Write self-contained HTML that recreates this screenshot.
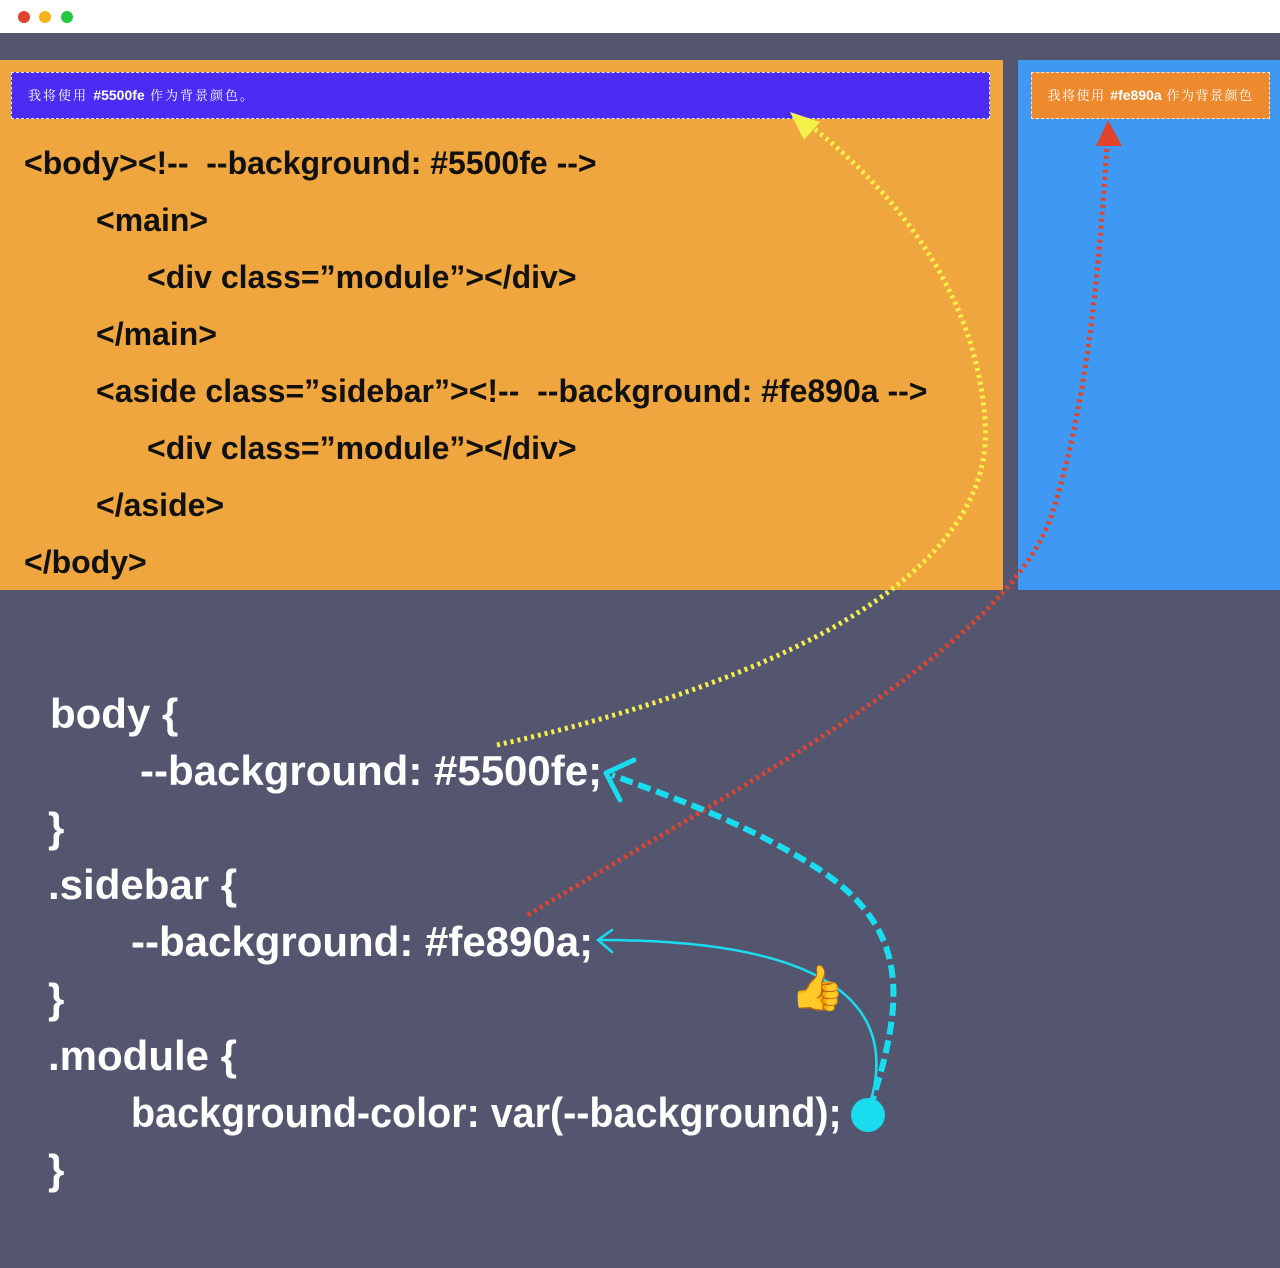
<!DOCTYPE html>
<html><head><meta charset="utf-8"><style>
html,body{margin:0;padding:0}
body{width:1280px;height:1268px;background:#545670;position:relative;overflow:hidden;font-family:"Liberation Sans","Noto Sans CJK SC",sans-serif}
.bar{position:absolute;left:0;top:0;width:1280px;height:33px;background:#fff}
.dot{position:absolute;top:11px;width:12px;height:12px;border-radius:50%}
.orange{position:absolute;left:0;top:60px;width:1003px;height:530px;background:#f0a63e}
.blue{position:absolute;left:1018px;top:60px;width:262px;height:530px;background:#3f98f2}
.ban{position:absolute;box-sizing:border-box;border:1.5px dashed #e8e8f0;color:#fff;font-size:13px;letter-spacing:2px;line-height:44px;font-family:"Noto Serif CJK SC","Liberation Serif",serif;white-space:nowrap}
.ban b{font-family:"Liberation Sans",sans-serif;font-size:14px;letter-spacing:0}
.c{position:absolute;color:#111;font-weight:bold;font-size:32px;white-space:pre;line-height:1}
.w{position:absolute;color:#fff;font-weight:bold;font-size:42px;white-space:pre;line-height:1}
svg{position:absolute;left:0;top:0}
</style></head><body>
<div class="bar"></div>
<div class="dot" style="left:18px;background:#e0442c"></div>
<div class="dot" style="left:39px;background:#f6b21c"></div>
<div class="dot" style="left:61px;background:#22c93e"></div>
<div class="orange"></div>
<div class="blue"></div>
<div class="ban" style="left:11px;top:72px;width:979px;height:47px;background:#4b2cf2;padding-left:16px">我将使用 <b>#5500fe</b> 作为背景颜色。</div>
<div class="ban" style="left:1031px;top:72px;width:239px;height:47px;background:#ee8a2e;text-align:center;letter-spacing:1.5px">我将使用 <b>#fe890a</b> 作为背景颜色</div>

<div class="c" style="left:24px;top:147px">&lt;body&gt;&lt;!--  --background: #5500fe --&gt;</div>
<div class="c" style="left:96px;top:204px">&lt;main&gt;</div>
<div class="c" style="left:147px;top:261px">&lt;div class=”module”&gt;&lt;/div&gt;</div>
<div class="c" style="left:96px;top:318px">&lt;/main&gt;</div>
<div class="c" style="left:96px;top:375px">&lt;aside class=”sidebar”&gt;&lt;!--  --background: #fe890a --&gt;</div>
<div class="c" style="left:147px;top:432px">&lt;div class=”module”&gt;&lt;/div&gt;</div>
<div class="c" style="left:96px;top:489px">&lt;/aside&gt;</div>
<div class="c" style="left:24px;top:546px">&lt;/body&gt;</div>

<div class="w" style="left:50px;top:693px">body {</div>
<div class="w" style="left:140px;top:750px">--background: #5500fe;</div>
<div class="w" style="left:48px;top:807px">}</div>
<div class="w" style="left:48px;top:864px">.sidebar {</div>
<div class="w" style="left:131px;top:921px">--background: #fe890a;</div>
<div class="w" style="left:48px;top:978px">}</div>
<div class="w" style="left:48px;top:1035px">.module {</div>
<div class="w" style="left:131px;top:1092px;transform:scaleX(0.94);transform-origin:left">background-color: var(--background);</div>
<div class="w" style="left:48px;top:1149px">}</div>

<svg width="1280" height="1268" viewBox="0 0 1280 1268">
<path d="M497 745 C700 700,1000 600,985 420 C975 280,880 180,812 127" fill="none" stroke="#f4f04a" stroke-width="5" stroke-dasharray="3 4"/>
<polygon points="790,112 820,122 804,140" fill="#f4f04a"/>
<path d="M528 915 C750 780,1000 650,1050 520 C1090 400,1100 250,1107 145" fill="none" stroke="#e0442c" stroke-width="5" stroke-dasharray="3 4"/>
<polygon points="1108,120 1096,146 1122,146" fill="#e0442c"/>
<path d="M870 1108 C905 1000,910 930,820 870 C750 825,680 800,612 775" fill="none" stroke="#19dcef" stroke-width="6" stroke-dasharray="13 6"/>
<path d="M634 760 L606 773 L620 800" fill="none" stroke="#19dcef" stroke-width="5" stroke-linecap="round" stroke-linejoin="round"/>
<path d="M868 1110 C895 1030,870 940,600 940" fill="none" stroke="#19dcef" stroke-width="2.5"/>
<path d="M612 930 L598 940 L612 952" fill="none" stroke="#19dcef" stroke-width="2.5" stroke-linecap="round"/>
<circle cx="868" cy="1115" r="17" fill="#19dcef"/>
<text x="790" y="1003" font-size="44" font-family="sans-serif">👍</text>
</svg>
</body></html>
